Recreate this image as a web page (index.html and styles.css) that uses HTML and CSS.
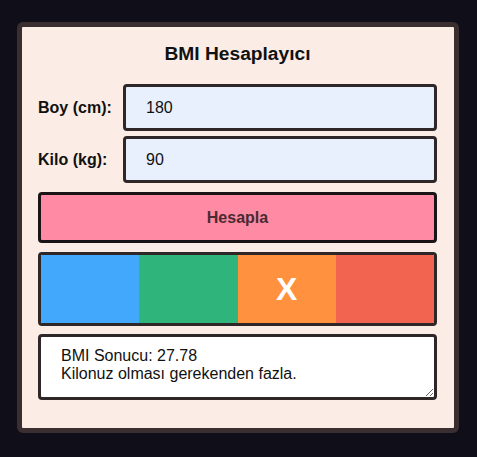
FILE: index.html
```html
<!DOCTYPE html>
<html lang="tr">
<head>
<meta charset="utf-8">
<title>BMI Hesaplayıcı</title>
<link rel="stylesheet" href="styles.css">
</head>
<body>
<div class="container">
  <h2 class="title">BMI Hesaplayıcı</h2>
  <div class="row">
    <label class="label" for="boy">Boy (cm):</label>
    <input class="field" id="boy" type="text" value="180">
  </div>
  <div class="row">
    <label class="label" for="kilo">Kilo (kg):</label>
    <input class="field" id="kilo" type="text" value="90">
  </div>
  <button class="calc">Hesapla</button>
  <div class="scale">
    <div class="seg seg-blue"></div>
    <div class="seg seg-green"></div>
    <div class="seg seg-orange">X</div>
    <div class="seg seg-red"></div>
  </div>
  <textarea class="result" readonly>BMI Sonucu: 27.78
Kilonuz olması gerekenden fazla.</textarea>
</div>
</body>
</html>
```

FILE: styles.css
```css
html, body {
  margin: 0;
  padding: 0;
}
body {
  background: #100f19;
  font-family: "Liberation Sans", Arial, sans-serif;
  padding-top: 22px;
  height: 457px;
  box-sizing: border-box;
}
.container {
  width: 442px;
  box-sizing: border-box;
  margin: 0 0 0 17px;
  background: #fbede6;
  border: 5px solid #3a2e30;
  border-radius: 6px;
  padding: 16px 17px 28px 16px;
  display: flex;
  flex-direction: column;
}
.title {
  margin: 0 0 19px;
  font-size: 19.2px;
  line-height: 22px;
  font-weight: bold;
  text-align: center;
  color: #111;
}
.row {
  display: flex;
  align-items: center;
  margin-bottom: 5px;
}
.label {
  width: 85px;
  font-size: 16px;
  font-weight: bold;
  color: #111;
}
.field {
  flex: 1;
  height: 47px;
  box-sizing: border-box;
  border: 3px solid #2f2628;
  border-radius: 4px;
  background: #e8f0fe;
  padding: 0 20px;
  font-family: "Liberation Sans", Arial, sans-serif;
  font-size: 16px;
  color: #111;
  outline: none;
}
.calc {
  margin-top: 4px;
  height: 51px;
  border: 3px solid #1a1416;
  border-radius: 4px;
  background: #ff8aa3;
  font-family: "Liberation Sans", Arial, sans-serif;
  font-size: 16px;
  font-weight: bold;
  color: #4a2a33;
  padding: 0;
}
.scale {
  margin-top: 9px;
  height: 74px;
  box-sizing: border-box;
  border: 3px solid #2f2628;
  border-radius: 4px;
  display: flex;
  overflow: hidden;
}
.seg {
  flex: 1;
  display: flex;
  align-items: center;
  justify-content: center;
  color: #fff;
  font-weight: bold;
  font-size: 32px;
}
.seg-blue { background: #42a8fb; }
.seg-green { background: #2fb47b; }
.seg-orange { background: #ff913f; }
.seg-red { background: #f26350; }
.result {
  margin-top: 8px;
  height: 66px;
  box-sizing: border-box;
  border: 3px solid #2f2628;
  border-radius: 4px;
  background: #fff;
  padding: 10px 20px;
  font-family: "Liberation Sans", Arial, sans-serif;
  font-size: 16px;
  line-height: 18px;
  color: #111;
  outline: none;
  resize: vertical;
  overflow: hidden;
}
```
